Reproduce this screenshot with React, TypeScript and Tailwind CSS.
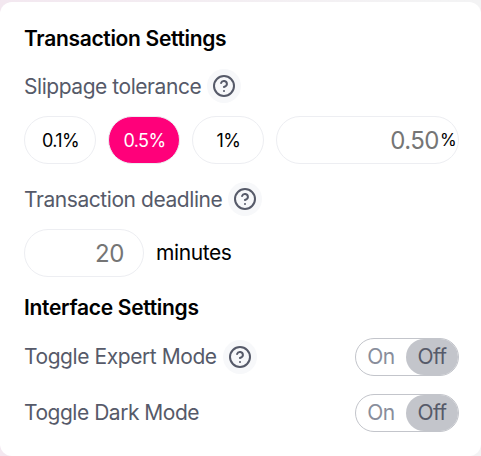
import React, { useState } from 'react';

const presets = ['0.1', '0.5', '1'];

function QuestionHelper() {
  return (
    <span className="ml-1.5 flex h-[34px] w-[34px] items-center justify-center rounded-full bg-[#f7f8fa] tracking-normal text-[#565a69]">
      <svg width="24" height="24" viewBox="0 0 24 24" fill="none" stroke="currentColor" strokeWidth="2" strokeLinecap="round" strokeLinejoin="round">
        <circle cx="12" cy="12" r="10" />
        <path d="M9.09 9a3 3 0 0 1 5.83 1c0 2-3 3-3 3" />
        <line x1="12" y1="17" x2="12.01" y2="17" />
      </svg>
    </span>
  );
}

function Toggle({ isActive, toggle }: { isActive: boolean; toggle: () => void }) {
  const active = 'w-[52px] bg-[#c3c5cb] text-[#565a69]';
  const inactive = 'w-[50px] text-[#888d9b]';

  return (
    <button onClick={toggle} className="flex h-[38px] w-[104px] rounded-full border border-[#c3c5cb] text-[21px] tracking-[-0.6px]">
      <span className={`flex h-full items-center justify-center rounded-full ${isActive ? active : inactive}`}>On</span>
      <span className={`flex h-full items-center justify-center rounded-full ${isActive ? inactive : active}`}>Off</span>
    </button>
  );
}

export default function App() {
  const [slippage, setSlippage] = useState('0.5');
  const [slippageInput, setSlippageInput] = useState('');
  const [deadline, setDeadline] = useState('');
  const [expertMode, setExpertMode] = useState(false);
  const [darkMode, setDarkMode] = useState(false);

  return (
    <div className="h-[456px] w-[481px] bg-linear-to-r from-[#f3e8f0] to-[#f3f3f4] to-90% pt-0.5 font-['Inter',sans-serif] text-black">
      <div className="h-full max-h-[454px] rounded-xl bg-white px-6 pt-[22px]">
        <h2 className="h-[30px] text-[21px] leading-[30px] font-semibold tracking-[-0.32px]">Transaction Settings</h2>

        <div className="mt-4 flex h-8 items-center text-[21px] tracking-[-0.45px] text-[#565a69]">
          <span className="pt-px">Slippage tolerance</span>
          <QuestionHelper />
        </div>
        <div className="mt-3.5 flex h-12 w-[435px] gap-3">
          {presets.map((value) => (
            <button
              key={value}
              onClick={() => setSlippage(value)}
              className={`w-[72px] rounded-full border border-[#edeef2] pt-px pl-px text-[18px] tracking-[-0.6px] ${slippage === value ? 'bg-[#ff007a] text-white' : ''}`}
            >
              {value}%
            </button>
          ))}
          <label className="flex min-w-0 flex-1 items-center rounded-full border border-[#edeef2] pr-1 text-[18px]">
            <input
              className="w-full min-w-0 pt-px text-right text-[24px] tracking-[-0.5px] outline-none placeholder:text-[#757575]"
              placeholder="0.50"
              value={slippageInput}
              onChange={(e) => setSlippageInput(e.target.value)}
            />
            <span className="ml-px w-[14px] pt-px text-[17px]">%</span>
          </label>
        </div>

        <div className="mt-[19px] flex h-8 items-center text-[21px] tracking-[-0.43px] text-[#565a69]">
          <span className="pt-px">Transaction deadline</span>
          <QuestionHelper />
        </div>
        <div className="mt-3.5 flex h-12 items-center gap-3">
          <input
            className="h-12 w-[120px] rounded-full border border-[#edeef2] px-[19px] text-right text-[24px] tracking-[-0.4px] outline-none placeholder:text-[#757575]"
            placeholder="20"
            value={deadline}
            onChange={(e) => setDeadline(e.target.value)}
          />
          <span className="text-[21px] tracking-[-0.4px]">minutes</span>
        </div>

        <h2 className="mt-4 h-[30px] text-[21px] leading-[30px] font-semibold tracking-[-0.3px]">Interface Settings</h2>

        <div className="mt-[15px] flex h-[38px] w-[435px] items-center text-[21px] tracking-[-0.43px] text-[#565a69]">
          <span>Toggle Expert Mode</span>
          <QuestionHelper />
          <div className="ml-auto"><Toggle isActive={expertMode} toggle={() => setExpertMode(!expertMode)} /></div>
        </div>
        <div className="mt-[18px] flex h-[38px] w-[435px] items-center justify-between text-[21px] tracking-[-0.48px] text-[#565a69]">
          <span>Toggle Dark Mode</span>
          <Toggle isActive={darkMode} toggle={() => setDarkMode(!darkMode)} />
        </div>
      </div>
    </div>
  );
}
